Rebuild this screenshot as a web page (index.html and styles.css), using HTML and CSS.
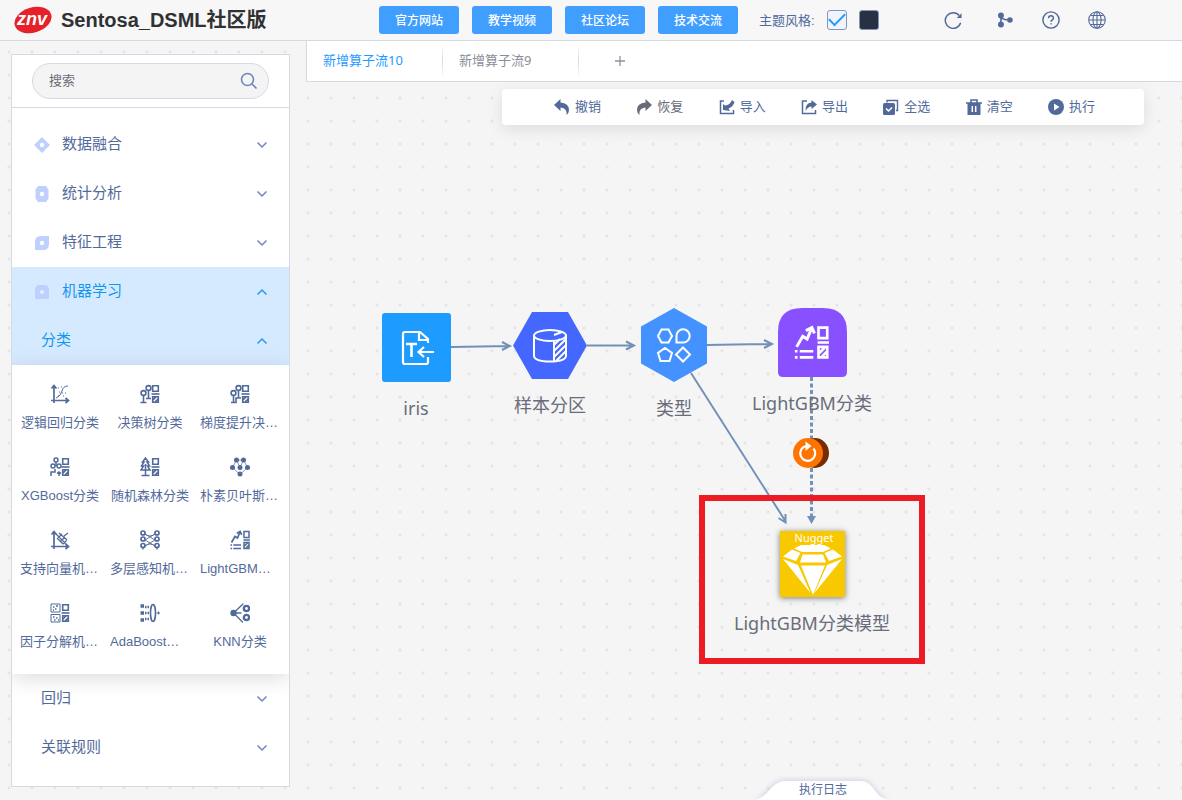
FILE: index.html
```html
<!DOCTYPE html>
<html lang="zh-CN">
<head>
<meta charset="utf-8">
<title>Sentosa_DSML社区版</title>
<link rel="stylesheet" href="styles.css">
</head>
<body>
<svg class="sprite" aria-hidden="true">
  <defs>
    <symbol id="chevron" viewBox="0 0 12 12"><path d="M1.500 3.500L6 8l4.500-4.500" fill="none" stroke="currentColor" stroke-width="1.500"/></symbol>
    <symbol id="axes" viewBox="0 0 20 20"><path d="M4 19V2M1.500 4.500L4 1.500l2.500 3M1 16.500h17M15.500 14l3 2.500-3 2.500" fill="none" stroke="currentColor" stroke-width="1.700"/></symbol>
    <symbol id="grid-col" viewBox="0 0 20 20"><path d="M12.700 1.700h5.600v5.600h-5.600zM12.700 12.700h5.600v5.600h-5.600zM13 16l3-3M15 18l3-3" fill="none" stroke="currentColor" stroke-width="1.600"/><path d="M11.500 10h8" stroke="currentColor" stroke-width="1.600"/></symbol>
    <symbol id="boost" viewBox="0 0 20 20"><path d="M1.500 12.500L5 6.500l2.500 1.500L10 2M6.800 3.200L10.200 1.500l1.500 3.300" fill="none" stroke="currentColor" stroke-width="1.700"/><path d="M0.500 15h1.500M3.300 15H11M0.500 18.500h1.500M3.300 18.500H11M13.500 10H20" stroke="currentColor" stroke-width="1.500"/><path d="M14 1.500h5v6h-5zM14 12.500h5v6h-5zM14.500 16l3-3M16 18l3-3" fill="none" stroke="currentColor" stroke-width="1.500"/></symbol>
  </defs>
</svg>

<header class="header">
  <div class="brand">
    <svg class="logo" viewBox="0 0 38 28" role="img" aria-label="znv"><ellipse cx="19" cy="14" rx="19" ry="12.500" fill="#e62129" transform="rotate(-17 19 14)"/><text class="logo-text" x="18" y="19" text-anchor="middle">znv</text></svg>
    <h1 class="title">Sentosa_DSML社区版</h1>
  </div>
  <nav class="nav">
    <button class="nav-button">官方网站</button>
    <button class="nav-button">教学视频</button>
    <button class="nav-button">社区论坛</button>
    <button class="nav-button">技术交流</button>
  </nav>
  <div class="theme">
    <label for="light">主题风格:</label>
    <input class="swatch swatch-light" id="light" type="checkbox" checked>
    <input class="swatch swatch-dark" type="checkbox" aria-label="深色">
  </div>
  <div class="tools">
    <button class="tool" aria-label="刷新"><svg viewBox="0 0 20 20"><path d="M17 5.200A8.700 8.700 0 1 0 18.500 13" fill="none" stroke="currentColor" stroke-width="1.600"/><path d="M19.500 2.500v5.300h-5.300z" fill="currentColor"/></svg></button>
    <button class="tool" aria-label="流程"><svg viewBox="0 0 20 20"><circle cx="5.500" cy="5" r="3.300" fill="currentColor"/><circle cx="5.500" cy="15" r="3.300" fill="currentColor"/><circle cx="15.500" cy="10" r="3.100" fill="currentColor"/><path d="M5.500 5v10M6 8q3 2 9 2" fill="none" stroke="currentColor" stroke-width="1.800"/></svg></button>
    <button class="tool" aria-label="帮助"><svg viewBox="0 0 20 20" fill="none" stroke="currentColor" stroke-width="1.600"><circle cx="10" cy="10" r="9"/><path d="M7.300 8q0-2.700 2.700-2.700T12.700 8q0 1.200-1.400 2-1.300.7-1.300 2M10 13.500v1.500"/></svg></button>
    <button class="tool" aria-label="语言"><svg viewBox="0 0 20 20" fill="none" stroke="currentColor" stroke-width="1.200"><circle cx="10" cy="10" r="9.200"/><ellipse cx="10" cy="10" rx="4.500" ry="9.200"/><path d="M10 1v18M1 10h18M3 5h14M3 15h14"/></svg></button>
  </div>
</header>

<div class="workspace">
  <aside class="sidebar">
    <div class="search">
      <div class="search-box">
        <input class="search-input" type="text" placeholder="搜索" aria-label="搜索">
        <svg class="search-icon" viewBox="0 0 18 18" fill="none" stroke="currentColor" stroke-width="1.600"><circle cx="7.500" cy="7.500" r="6"/><path d="M12 12l4.500 4.500"/></svg>
      </div>
    </div>
    <div class="menu">
      <button class="menu-row"><svg class="menu-icon" viewBox="0 0 16 16"><path d="M8 0l8 8-8 8-8-8z" fill="#bfd0ff"/><circle cx="8" cy="8" r="2.200" fill="#fff"/></svg><span>数据融合</span><svg class="chevron"><use href="#chevron"/></svg></button>
      <button class="menu-row"><svg class="menu-icon" viewBox="0 0 16 16"><path d="M4 0h8l2.500 3.500v9L12 16H4l-2.500-3.500v-9z" fill="#bfd0ff"/><circle cx="8" cy="8" r="2.200" fill="#fff"/></svg><span>统计分析</span><svg class="chevron"><use href="#chevron"/></svg></button>
      <button class="menu-row"><svg class="menu-icon" viewBox="0 0 16 16"><path d="M1 15V7q0-6 6-6h8v8q0 6-6 6z" fill="#bfd0ff"/><circle cx="8" cy="8" r="2.200" fill="#fff"/></svg><span>特征工程</span><svg class="chevron"><use href="#chevron"/></svg></button>
      <button class="menu-row active"><svg class="menu-icon" viewBox="0 0 16 16"><path d="M1 14V6q0-5 5-5h4q5 0 5 5v8q0 1-1 1H2q-1 0-1-1z" fill="#bfd0ff"/><circle cx="8" cy="8" r="2" fill="#e4f1ff"/></svg><span>机器学习</span><svg class="chevron up"><use href="#chevron"/></svg></button>
      <button class="menu-row sub active"><span>分类</span><svg class="chevron up"><use href="#chevron"/></svg></button>
      <div class="operators">
        <div class="operator"><svg class="op-icon" viewBox="0 0 20 20"><use href="#axes"/><path d="M6 14q5-2 6-7t6-5" fill="none" stroke="currentColor"/><path d="M8 4h1M9 8h1M13 12h1M15 9h1M8 12h1M11 3h1M12 9h1" stroke="currentColor" stroke-width="1.200"/></svg><span class="op-name">逻辑回归分类</span></div>
        <div class="operator"><svg class="op-icon" viewBox="0 0 20 20"><use href="#grid-col"/><g fill="none" stroke="currentColor" stroke-width="1.600"><circle cx="3.500" cy="9" r="2.400"/><circle cx="8.500" cy="4" r="2.400"/><path d="M3.500 11.500v7M.5 18.500h6M8.500 6.500v8M6 14.500h5"/></g></svg><span class="op-name">决策树分类</span></div>
        <div class="operator"><svg class="op-icon" viewBox="0 0 20 20"><use href="#grid-col"/><g fill="none" stroke="currentColor" stroke-width="1.600"><circle cx="3.500" cy="9" r="2.400"/><circle cx="8.500" cy="4" r="2.400"/><path d="M3.500 11.500v7M1 18.500h5V14h5M8.500 6.500V14"/></g></svg><span class="op-name cut">梯度提升决…</span></div>
        <div class="operator"><svg class="op-icon" viewBox="0 0 20 20"><use href="#grid-col"/><g fill="none" stroke="currentColor" stroke-width="1.500"><circle cx="6" cy="3" r="2"/><circle cx="3" cy="9" r="2"/><circle cx="9" cy="9" r="2"/><path d="M6 5v4M1 19v-4h4v-3M9 19v-4M7 16.500L9 15l2 1.500"/></g></svg><span class="op-name">XGBoost分类</span></div>
        <div class="operator"><svg class="op-icon" viewBox="0 0 20 20"><use href="#grid-col"/><path d="M5.500 1L2.500 5h1.500L1.500 9H3.500L1 13h9L7.500 9h2L7 5h1.500zM5.500 7v12M1.500 18.500h8" fill="none" stroke="currentColor" stroke-width="1.500"/></svg><span class="op-name">随机森林分类</span></div>
        <div class="operator"><svg class="op-icon" viewBox="0 0 20 20"><path d="M6.500 3h7l4 7.500-7.500 7-7.500-7zM6.500 3l3.500 7.500L13.500 3" fill="none" stroke="currentColor" stroke-width=".7"/><g fill="currentColor"><circle cx="6.500" cy="3" r="2.500"/><circle cx="13.500" cy="3" r="2.500"/><circle cx="2.500" cy="10.500" r="2.500"/><circle cx="10" cy="10.500" r="2.500"/><circle cx="17.500" cy="10.500" r="2.500"/><circle cx="10" cy="17" r="2.500"/></g></svg><span class="op-name cut">朴素贝叶斯…</span></div>
        <div class="operator"><svg class="op-icon" viewBox="0 0 20 20"><use href="#axes"/><path d="M6 4l10 10M7 8l6 6M9 3l8 7M7 9l5-5M10 12l5-5M13 14l4-4M14 6l4-3" fill="none" stroke="currentColor" stroke-width="1.300"/></svg><span class="op-name cut">支持向量机…</span></div>
        <div class="operator"><svg class="op-icon" viewBox="0 0 20 20" fill="none" stroke="currentColor"><path d="M5 4l10 6-10 6M15 4L5 10l10 6M5 4q5 4 10 0M5 16q5-4 10 0" stroke-width=".9"/><path d="M3 17v2.500M17 17v2.500" stroke-width="1.400"/><g stroke-width="1.700"><circle cx="3" cy="3" r="2"/><circle cx="3" cy="9" r="2"/><circle cx="3" cy="15.500" r="2"/><circle cx="17" cy="3" r="2"/><circle cx="17" cy="9" r="2"/><circle cx="17" cy="15.500" r="2"/></g></svg><span class="op-name cut">多层感知机…</span></div>
        <div class="operator"><svg class="op-icon" viewBox="0 0 20 20"><use href="#boost"/></svg><span class="op-name cut">LightGBM…</span></div>
        <div class="operator"><svg class="op-icon" viewBox="0 0 20 20"><use href="#grid-col"/><path d="M1 1h9v8H1zM1 11.500h9V19H1z" fill="none" stroke="currentColor"/><path d="M3 4h1.500M6 3h2M5 6h1.500M3 7h1M3 14h1.500M6 15h1.500M4 17h1.500M8 17h1" stroke="currentColor" stroke-width="1.500"/></svg><span class="op-name cut">因子分解机…</span></div>
        <div class="operator"><svg class="op-icon" viewBox="0 0 20 20"><path d="M.5 3h3.500M.5 10h3.500M.5 17h3.500" stroke="currentColor" stroke-width="3.700"/><path d="M5 4h4M5 10h4M5 16h4" stroke="currentColor" stroke-width="2.400" stroke-dasharray="1.500 1"/><ellipse cx="13" cy="10" rx="2.500" ry="8.500" fill="none" stroke="currentColor" stroke-width="1.600"/><path d="M16.500 10h3.500M18.500 8.500v3" stroke="currentColor"/></svg><span class="op-name cut">AdaBoost…</span></div>
        <div class="operator"><svg class="op-icon" viewBox="0 0 20 20"><circle cx="3.500" cy="10" r="3.200" fill="currentColor"/><path d="M3.500 10L13 1M3.500 10l9 9M5 10h6" stroke="currentColor" stroke-width="1.300" stroke-linecap="round"/><g fill="none" stroke="currentColor" stroke-width="2.400"><circle cx="16.500" cy="5.500" r="2.600"/><circle cx="16.500" cy="14.500" r="2.600"/></g></svg><span class="op-name">KNN分类</span></div>
      </div>
      <button class="menu-row sub"><span>回归</span><svg class="chevron"><use href="#chevron"/></svg></button>
      <button class="menu-row sub"><span>关联规则</span><svg class="chevron"><use href="#chevron"/></svg></button>
    </div>
  </aside>

  <main class="main">
    <div class="tabs">
      <button class="tab current">新增算子流10</button>
      <button class="tab">新增算子流9</button>
      <button class="tab-add" aria-label="新增"><svg viewBox="0 0 12 12"><path d="M6 1v10M1 6h10" stroke="#8f939e" stroke-width="1.300"/></svg></button>
    </div>
    <div class="canvas">
      <div class="toolbar">
        <button class="action"><svg viewBox="0 0 16 16"><path d="M6.500 0v3.500Q15 4 15 11q0 3-2.500 5 1-7-6-7.500V12L0 6z" fill="currentColor"/></svg><span>撤销</span></button>
        <button class="action muted"><svg viewBox="0 0 16 16"><path d="M9.500 0v3.500Q1 4 1 11q0 3 2.500 5-1-7 6-7.500V12L16 6z" fill="currentColor"/></svg><span>恢复</span></button>
        <button class="action"><svg viewBox="0 0 16 16"><path d="M5 2H1.500v12.500h13V11" fill="none" stroke="currentColor" stroke-width="1.500"/><path d="M4 5l2 1.500Q11 6 13 1l2.500 2Q14 8 9.500 9.500L11 12l-7-1z" fill="currentColor"/></svg><span>导入</span></button>
        <button class="action"><svg viewBox="0 0 16 16"><path d="M6 2H1.500v12.500h13V11" fill="none" stroke="currentColor" stroke-width="1.500"/><path d="M10.500 1L16 5.500 10.500 10V7.500Q7 7.500 4.500 12 4 4 10.500 3.500z" fill="currentColor"/></svg><span>导出</span></button>
        <button class="action"><svg viewBox="0 0 16 16"><path d="M4 3.500V1.500h10.500v10H13" fill="none" stroke="currentColor" stroke-width="1.400"/><rect y="4" width="12" height="12" rx="1.500" fill="currentColor"/><path d="M3 9.500l2.500 2.500L9 8.500" fill="none" stroke="#fff" stroke-width="1.500"/></svg><span>全选</span></button>
        <button class="action"><svg viewBox="0 0 16 16"><path d="M0 4h16M5 4V1h6v3" fill="none" stroke="currentColor" stroke-width="1.600"/><path d="M1.500 4h13v12h-13z" fill="currentColor"/><path d="M6.300 7v6M9.700 7v6" stroke="#fff" stroke-width="1.500"/></svg><span>清空</span></button>
        <button class="action"><svg viewBox="0 0 16 16"><circle cx="8" cy="8" r="8" fill="currentColor"/><path d="M6 4.500l5.500 3.500L6 11.500z" fill="#fff"/></svg><span>执行</span></button>
      </div>

      <svg class="edges" width="875" height="718" viewBox="307 82 875 718" fill="none" stroke="#7191b8" stroke-width="2">
        <path d="M451 347l59-1M502 342l8 4-8 4"/>
        <path d="M587 345.500h46M626 341.500l8 4-8 4"/>
        <path d="M707 345l64-1M764 340l8 4-8 4"/>
        <path d="M691 373l95 149M785.500 514v8.500l-7-4.500"/>
        <path d="M811.500 377v139" stroke-width="3" stroke-dasharray="4 2.500"/>
        <path d="M807 516h9l-4.500 8z" fill="#7191b8" stroke="none"/>
        <ellipse cx="815" cy="453" rx="14" ry="15" fill="#742c00" stroke="none"/>
        <circle cx="808" cy="453" r="15" fill="#ff7300" stroke="none"/>
        <path d="M806 446a7.500 7.500 0 1 0 7.500 2.500" stroke="#fff" stroke-width="2.200"/>
        <path d="M805.500 441.500l6 4.500-6 5z" fill="#fff" stroke="none"/>
      </svg>

      <div class="node node-iris">
        <svg width="69" height="69" viewBox="0 0 69 69"><rect width="69" height="69" rx="3" fill="#1e9bff"/><g fill="none" stroke="#fff" stroke-width="2.200"><path d="M46 30v-4l-8-7H23q-2 0-2 2v28q0 2 2 2h21q2 0 2-2v-5M37 19v8h9"/><path d="M24 31h11M29.500 31v13" stroke-width="2.600"/><path d="M52 39H37M42 34l-5.500 5 5.500 5"/></g></svg>
        <span>iris</span>
      </div>
      <div class="node node-sample">
        <svg width="74" height="67" viewBox="0 0 74 67"><path d="M19 0h36l19 33.500L55 67H19L0 33.500z" fill="#4468ff"/><g fill="none" stroke="#fff" stroke-width="2"><ellipse cx="37" cy="23.500" rx="16" ry="5.500"/><path d="M21 23.500v20q0 6 16 6t16-6v-20M41 29v20M41 23l8-3M41 39l12-12M41 45l12-12M43 49l10-10M41 33l6-6"/></g></svg>
        <span>样本分区</span>
      </div>
      <div class="node node-type">
        <svg width="66" height="74" viewBox="0 0 66 74"><path d="M33 0l33 18.500v37L33 74 0 55.500v-37z" fill="#4492ff"/><g fill="none" stroke="#fff" stroke-width="2"><path d="M20.500 21.500h7l3.500 6.500-3.500 6.500h-7L17 28zM35.500 34.500V28a6.600 6.600 0 1 1 6.500 6.500zM24 40l7 5-2.500 8h-9L17 45zM42 39.500l7 7-7 7-7-7z"/></g></svg>
        <span>类型</span>
      </div>
      <div class="node node-gbm">
        <svg width="69" height="69" viewBox="0 0 69 69"><path d="M0 64V24Q0 0 24 0h21q24 0 24 24v40q0 5-5 5H5q-5 0-5-5z" fill="#8850ff"/><svg x="16" y="17" width="35" height="35" color="#fff"><use href="#boost"/></svg></svg>
        <span>LightGBM分类</span>
      </div>
      <div class="node node-nugget">
        <svg class="nugget" width="65" height="66" viewBox="0 0 65 66"><rect width="65" height="66" fill="#f8c800"/><text class="nugget-text" x="34" y="11" text-anchor="middle">Nugget</text><g fill="#fff"><path d="M21 14h23l7 3.500-8 3.500H22l-8-3.500zM12 18.500L20.500 22 16 30 3 25.500zM53 18.500L44.500 22l4.500 8 13-4.500zM22.500 23.500h20.500l3 8H20zM3 28l15 6 12.500 28zM62 28l-15 6-12.500 28zM21 34.500h24L33 64z"/></g></svg>
        <span>LightGBM分类模型</span>
      </div>
      <div class="highlight"></div>

      <button class="log"><svg class="log-shape" viewBox="0 0 136 21" preserveAspectRatio="none"><path d="M0 21Q8 19 14 11T28 1h78q8 0 14 10t16 10z" fill="#fff"/></svg><span class="log-text">执行日志</span></button>
    </div>
  </main>
</div>
</body>
</html>
```
FILE: styles.css
```css
* { box-sizing: border-box; }

body {
  margin: 0;
  height: 100vh;
  display: flex;
  flex-direction: column;
  overflow: hidden;
  color: #526a9b;
  font-family: "Liberation Sans", "Noto Sans CJK SC", sans-serif;
  font-size: 13px;
  background-color: #f5f5f5;
}

button {
  margin: 0;
  padding: 0;
  border: 0;
  background: none;
  color: inherit;
  font: inherit;
  cursor: pointer;
}

svg { display: block; flex: none; }
.sprite { position: absolute; width: 0; height: 0; }

/* Header */
.header {
  display: flex;
  align-items: center;
  height: 41px;
  flex: none;
  padding: 0 76px 1px 14px;
  background: #f7f7f8;
  border-bottom: 1px solid #d6d9e3;
}
.brand { display: flex; align-items: center; gap: 9px; width: 365px; }
.logo { width: 38px; height: 28px; }
.logo-text { font: italic bold 18px "Liberation Sans", sans-serif; fill: #fff; }
.title {
  margin: 0;
  color: #303133;
  font-size: 20px;
  line-height: 28px;
  white-space: nowrap;
}
.nav { display: flex; gap: 13px; }
.nav-button {
  width: 80px;
  height: 28px;
  border-radius: 3px;
  background: #409eff;
  color: #fff;
  font-size: 12px;
  font-weight: 500;
}
.theme { display: flex; align-items: center; gap: 12px; margin-left: 21px; white-space: nowrap; }
.swatch {
  appearance: none;
  width: 20px;
  height: 20px;
  margin: 0;
  border: 1px solid #8694b5;
  border-radius: 3px;
}
.swatch-light {
  display: grid;
  place-items: center;
  background: #f0f4ff;
}
.swatch-light:checked::after {
  content: "";
  width: 14px;
  height: 7px;
  margin-bottom: 4px;
  border-left: 2px solid #1e9bff;
  border-bottom: 2px solid #1e9bff;
  transform: rotate(-45deg);
}
.swatch-dark { background: #283044; }
.tools { display: flex; gap: 28px; margin-left: auto; }
.tool { width: 18px; height: 18px; }
.tool:first-child { margin-right: 6px; }
.tool svg { width: 18px; height: 18px; }

/* Dotted page area */
.workspace {
  display: flex;
  flex: 1;
  min-height: 0;
  background-image: radial-gradient(circle at 11px 11px, #e5e5e7 1px, transparent 2px);
  background-size: 23px 23px;
  background-position: -2px 0;
}

/* Sidebar */
.sidebar {
  width: 279px;
  flex: none;
  margin: 13px 16px 13px 11px;
  background: #fff;
  border: 1px solid #d6d9e3;
  overflow: hidden;
}
.search { padding: 8px 20px; border-bottom: 1px solid #d6d9e3; }
.search-box {
  display: flex;
  align-items: center;
  height: 36px;
  padding: 0 10px 0 16px;
  background: #f4f4f5;
  border: 1px solid #d6d9e6;
  border-radius: 18px;
}
.search-input {
  flex: 1;
  min-width: 0;
  padding: 0 0 2px;
  border: 0;
  outline: 0;
  background: none;
  font: inherit;
}
.search-input::placeholder { color: #6b6d75; }
.search-icon { width: 18px; height: 18px; color: #6f86b8; }
.menu { padding-top: 12px; }
.menu-row {
  display: flex;
  align-items: center;
  width: 100%;
  height: 49px;
  padding: 0 21px 0 22px;
  font-size: 15px;
}
.menu-row span { padding-bottom: 4px; }
.menu-row.sub { padding-left: 29px; }
.menu-row.active { background: #d6eaff; color: #1296f0; }
.menu-icon { width: 16px; height: 16px; margin-right: 12px; }
.chevron { width: 12px; height: 12px; margin-left: auto; color: #7286bb; }
.chevron.up { color: #1e9bff; transform: rotate(180deg); }
.operators {
  position: relative;
  display: grid;
  grid-template-columns: repeat(3, 80px);
  column-gap: 10px;
  row-gap: 19px;
  padding: 19px 0 17px 8px;
  background: #fff;
  box-shadow: 0 4px 20px rgba(0, 0, 0, 0.14);
}
.operator {
  display: flex;
  flex-direction: column;
  align-items: center;
  gap: 9px;
  height: 54px;
}
.op-icon { width: 20px; height: 20px; }
.op-name { line-height: 20px; white-space: nowrap; }
.op-name.cut { align-self: flex-start; }

/* Tabs */
.main {
  display: flex;
  flex-direction: column;
  flex: 1;
  min-width: 0;
}
.tabs {
  display: flex;
  height: 41px;
  flex: none;
  background: #fff;
  border-left: 1px solid #d6d9e3;
  border-bottom: 1px solid #d6d9e3;
}
.tab {
  width: 136px;
  padding: 0 0 4px 16px;
  border-right: 1px solid;
  border-image: linear-gradient(#fff 10%, #d4d9ec, #fff 90%) 1;
  color: #8a8e99;
  font-family: "Noto Sans", "Noto Sans CJK SC", sans-serif;
  text-align: left;
}
.tab.current { color: #1e9bff; }
.tab-add { display: grid; place-items: center; width: 82px; }
.tab-add svg { width: 12px; height: 12px; }

/* Flow canvas */
.canvas { position: relative; flex: 1; padding: 7px 38px 0 0; overflow: hidden; }
.toolbar {
  position: relative;
  z-index: 1;
  display: flex;
  justify-content: space-between;
  width: 642px;
  height: 36px;
  margin-left: auto;
  padding: 0 49px 0 52px;
  background: #fff;
  border-radius: 4px;
  box-shadow: 0 4px 16px rgba(0, 0, 0, 0.1);
}
.action { display: flex; align-items: center; gap: 5px; white-space: nowrap; }
.action span { padding-bottom: 3px; }
.action svg { width: 16px; height: 16px; }
.action.muted { color: #686b78; }
.edges { position: absolute; left: 1px; top: 0; }
.node {
  position: absolute;
  display: flex;
  flex-direction: column;
  align-items: center;
  gap: 14px;
  width: 180px;
  color: #696c7a;
  font-family: "Noto Sans", "Noto Sans CJK SC", sans-serif;
  font-size: 18px;
  line-height: 24px;
  white-space: nowrap;
}
.node-iris { left: 20px; top: 231px; }
.node-sample { left: 154px; top: 230px; }
.node-type { left: 278px; top: 226px; }
.node-gbm { left: 416px; top: 226px; }
.node-nugget { left: 416px; top: 449px; }
.nugget { box-shadow: 0 1px 6px rgba(0, 0, 0, 0.5); }
.nugget-text { font: 11px "Noto Sans", sans-serif; fill: #fff; }
.highlight {
  position: absolute;
  left: 393px;
  top: 413px;
  width: 226px;
  height: 169px;
  border: 6px solid #ed1c24;
}
.log {
  position: absolute;
  left: 449px;
  bottom: 0;
  width: 136px;
  height: 20px;
  font-size: 12px;
}
.log-shape {
  position: absolute;
  inset: 0;
  width: 100%;
  height: 100%;
  filter: drop-shadow(0 0 3px rgba(100, 115, 190, 0.35));
}
.log-text { position: relative; line-height: 20px; }
```
